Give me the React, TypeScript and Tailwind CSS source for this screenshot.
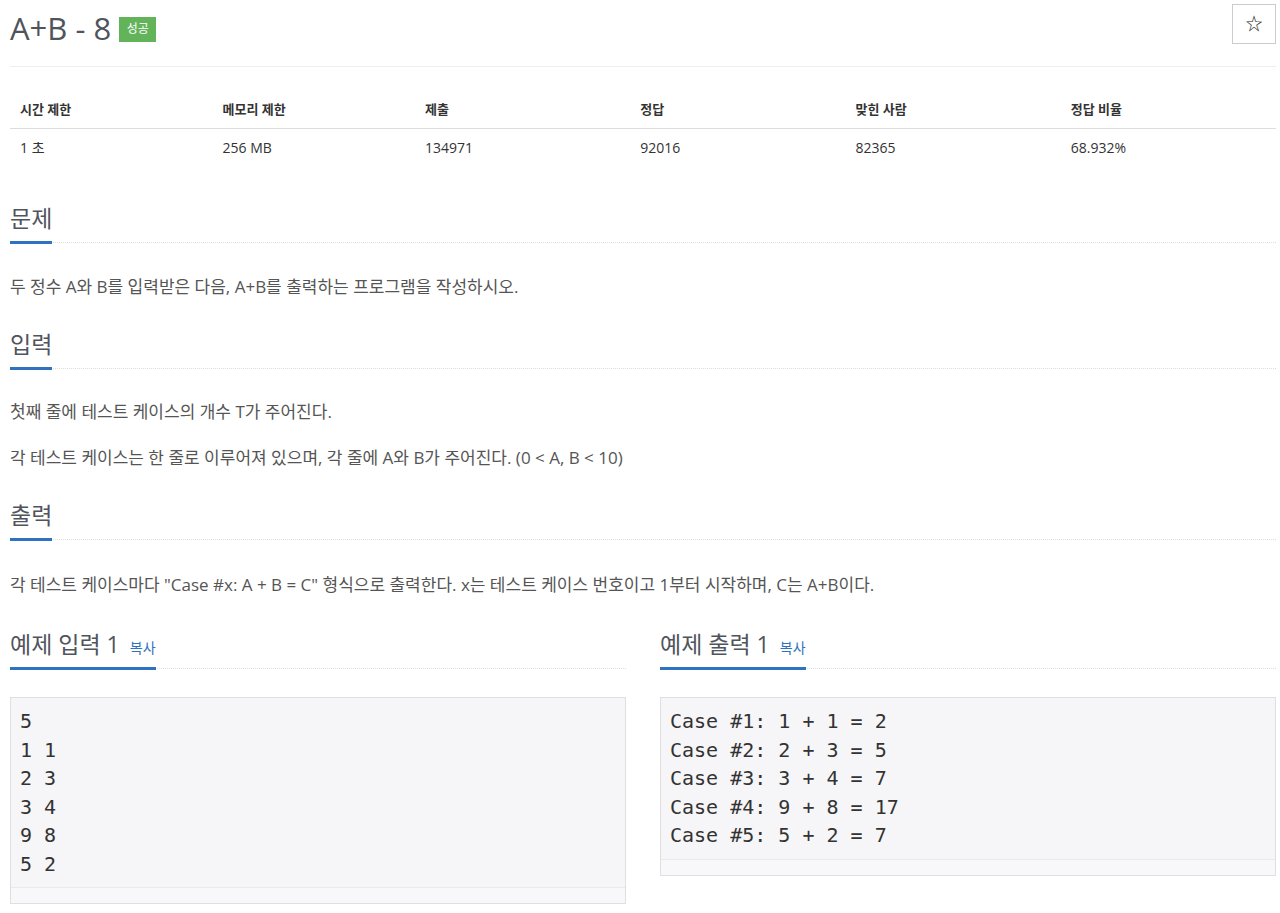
import React from 'react';

const FONT = { fontFamily: '"Open Sans", "Noto Sans CJK KR", sans-serif' };
const MONO = { fontFamily: '"DejaVu Sans Mono", monospace' };

const SectionTitle: React.FC<{ children: React.ReactNode; className?: string }> = ({ children, className }) => (
    <div className={`border-b border-dotted border-[#dddddd] ${className ?? ''}`}>
        <h2 className="inline-flex items-baseline -mb-[2px] border-b-[3px] border-[#2f72c0] pb-[8px] text-[23px] leading-[30px] font-normal text-[#50545c]">
            {children}
        </h2>
    </div>
);

const SampleBox: React.FC<{ lines: string[] }> = ({ lines }) => (
    <div className="mt-[28px] border border-[#dedee3] bg-[#f6f6f8]">
        <pre className="px-[9px] pt-[9px] pb-[9px] text-[20px] leading-[28.57px] text-[#333]" style={MONO}>
            {lines.join('\n')}
        </pre>
        <div className="h-[16px] border-t border-[#eaeaee] bg-[#f8f8fa]" />
    </div>
);

const stats = [
    ['시간 제한', '1 초', 'w-[16%]'],
    ['메모리 제한', '256 MB', 'w-[16%]'],
    ['제출', '134971', 'w-[17%]'],
    ['정답', '92016', 'w-[17%]'],
    ['맞힌 사람', '82365', 'w-[17%]'],
    ['정답 비율', '68.932%', 'w-[17%]'],
];

export default function App() {
    return (
        <div className="min-h-[913px] bg-white pl-[10px] pr-[4px] text-[#555]" style={FONT}>
            {/* Title row */}
            <div className="flex items-start justify-between border-b border-[#eeeeee] h-[67px]">
                <div className="flex items-center pt-[10px] gap-[8px]">
                    <h1 className="text-[31px] leading-[36px] font-normal text-[#50545c]">A+B - 8</h1>
                    <span className="mt-[2px] inline-flex h-[25px] w-[37px] items-center justify-center bg-[#62b35a] text-[12px] text-white">성공</span>
                </div>
                <button className="mt-[4px] flex h-[40px] w-[44px] items-center justify-center border border-[#cccccc] bg-white text-[17px] text-[#222]">
                    ☆
                </button>
            </div>

            {/* Stats table */}
            <table className="mt-[23px] w-full table-fixed border-collapse text-left">
                <thead>
                    <tr className="border-b border-[#dddddd]">
                        {stats.map(([h, , w]) => (
                            <th key={h} className={`${w} px-[10px] py-[9px] text-[13px] leading-[20px] font-bold text-[#333]`}>{h}</th>
                        ))}
                    </tr>
                </thead>
                <tbody>
                    <tr>
                        {stats.map(([h, v]) => (
                            <td key={h} className="px-[10px] py-[9px] text-[14px] leading-[20px] text-[#333]">{v}</td>
                        ))}
                    </tr>
                </tbody>
            </table>

            <SectionTitle className="mt-[36px]">문제</SectionTitle>
            <p className="mt-[32px] text-[17px] leading-[24px]">두 정수 A와 B를 입력받은 다음, A+B를 출력하는 프로그램을 작성하시오.</p>

            <SectionTitle className="mt-[30px]">입력</SectionTitle>
            <p className="mt-[31px] text-[17px] leading-[24px]">첫째 줄에 테스트 케이스의 개수 T가 주어진다.</p>
            <p className="mt-[22px] text-[17px] leading-[24px]">각 테스트 케이스는 한 줄로 이루어져 있으며, 각 줄에 A와 B가 주어진다. (0 &lt; A, B &lt; 10)</p>

            <SectionTitle className="mt-[30px]">출력</SectionTitle>
            <p className="mt-[33px] text-[17px] leading-[24px]">각 테스트 케이스마다 "Case #x: A + B = C" 형식으로 출력한다. x는 테스트 케이스 번호이고 1부터 시작하며, C는 A+B이다.</p>

            {/* Samples */}
            <div className="mt-[32px] grid grid-cols-2 gap-[34px]">
                <div>
                    <SectionTitle>
                        예제 입력 1<a className="ml-[10px] text-[14px] leading-none text-[#2f72c0]">복사</a>
                    </SectionTitle>
                    <SampleBox lines={['5', '1 1', '2 3', '3 4', '9 8', '5 2']} />
                </div>
                <div>
                    <SectionTitle>
                        예제 출력 1<a className="ml-[10px] text-[14px] leading-none text-[#2f72c0]">복사</a>
                    </SectionTitle>
                    <SampleBox lines={['Case #1: 1 + 1 = 2', 'Case #2: 2 + 3 = 5', 'Case #3: 3 + 4 = 7', 'Case #4: 9 + 8 = 17', 'Case #5: 5 + 2 = 7']} />
                </div>
            </div>
        </div>
    );
}
